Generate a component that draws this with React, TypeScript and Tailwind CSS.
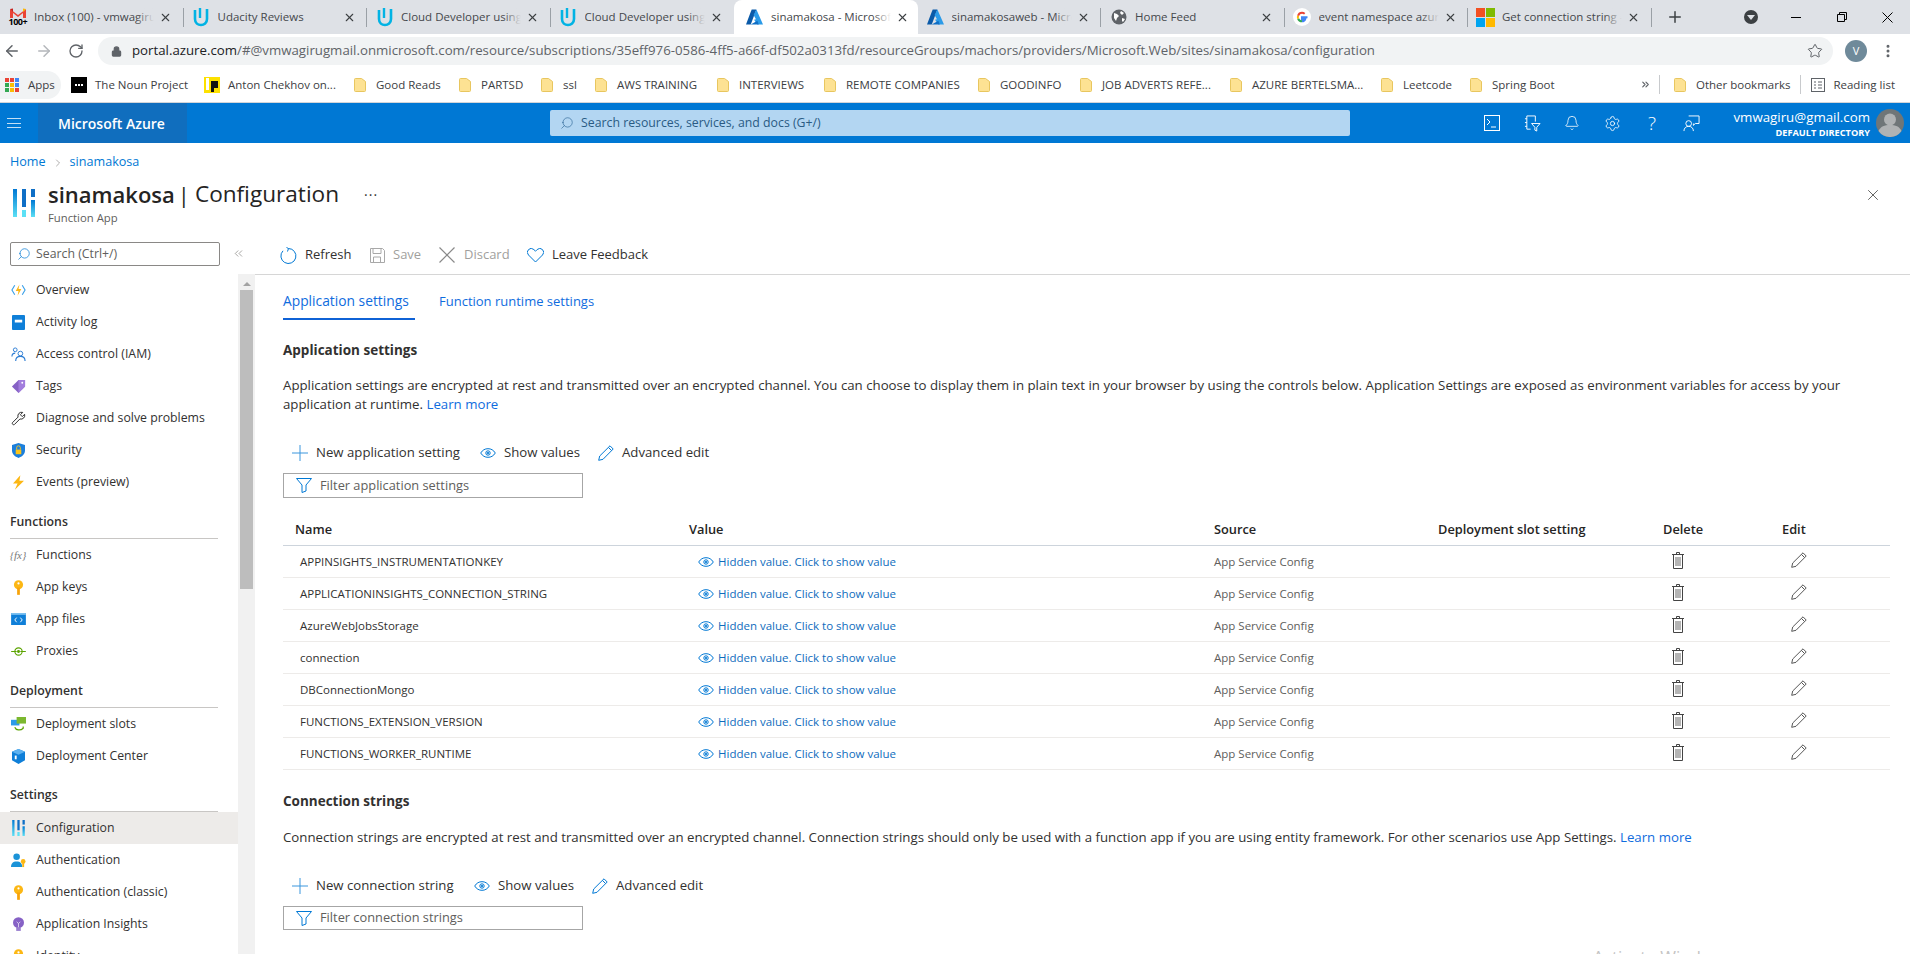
import React from 'react'
import {
  ArrowLeft,
  ArrowRight,
  Bell,
  ChevronRight,
  ChevronsLeft,
  ChevronsRight,
  Lock,
  MoreVertical,
  Plus,
  RotateCw,
  Search,
  Settings,
  Star,
  X,
} from 'lucide-react'

const Gmail = () => (
  <span className="relative block w-[18px] h-[20px]">
    <svg viewBox="0 0 18 12" className="w-[18px] h-[12px] block">
      <path d="M1 11V2l8 6 8-6v9h-3V6L9 10 4 6v5z" fill="#ea4335" />
      <path d="M1 2l3 3V1.5z" fill="#c5221f" />
      <path d="M14 1.5V5l3-3z" fill="#fbbc04" />
    </svg>
    <span className="absolute left-0 top-[10px] text-[9px] leading-[10px] font-bold text-black tracking-[-0.5px]">100+</span>
  </span>
)
const Udacity = () => (
  <svg viewBox="0 0 18 20" className="w-[18px] h-[20px]" fill="none" stroke="#02b3e4">
    <path d="M3 3v9c0 4 3 6 6 6s6-2 6-6V2" strokeWidth="2.6" />
    <path d="M8 1v10" strokeWidth="2.4" />
  </svg>
)
const AzureA = () => (
  <svg viewBox="0 0 18 18" className="w-[17px] h-[18px]">
    <path d="M6 1h5L5 17H0z" fill="#0a5aa8" />
    <path d="M11 1l7 16h-6L8.500 12l2-.5L8 7z" fill="#2b9be8" />
    <path d="M5 17l7-4 1.500 4z" fill="#0f6fc6" />
  </svg>
)
const Globe = () => (
  <svg viewBox="0 0 16 16" className="w-[16px] h-[16px]">
    <circle cx="8" cy="8" r="7.500" fill="#5f6368" />
    <path d="M3 4l3 1 2 2-2 2-1 3-2-3zM10 2l3 2-2 2-2-2zM11 9l3 1-2 3-1-1z" fill="#fff" />
  </svg>
)
const GoogleG = () => (
  <svg viewBox="0 0 18 18" className="w-[18px] h-[18px]">
    <circle cx="9" cy="9" r="9" fill="#fff" />
    <path d="M14.500 9.200H9v2h3.200c-.4 1.300-1.600 2.100-3.200 2.100" fill="none" stroke="#4285f4" strokeWidth="2" />
    <path d="M9 13.300c-1.800 0-3.300-1.100-3.900-2.700" fill="none" stroke="#34a853" strokeWidth="2" />
    <path d="M5.100 10.600a4.500 4.500 0 010-3" fill="none" stroke="#fbbc05" strokeWidth="2" />
    <path d="M5.100 7.600C5.700 6 7.200 4.800 9 4.800c1 0 1.900.4 2.700 1" fill="none" stroke="#ea4335" strokeWidth="2" />
  </svg>
)
const MsLogo = () => (
  <span className="grid grid-cols-[9px_9px] grid-rows-[9px_9px] gap-[1px]">
    <span className="bg-[#f25022]" />
    <span className="bg-[#7fba00]" />
    <span className="bg-[#00a4ef]" />
    <span className="bg-[#ffb900]" />
  </span>
)

const tabs = [
  { title: 'Inbox (100) - vmwagiru', icon: <Gmail />, sep: true, fade: true },
  { title: 'Udacity Reviews', icon: <Udacity />, sep: true, fade: false },
  { title: 'Cloud Developer using', icon: <Udacity />, sep: true, fade: true },
  { title: 'Cloud Developer using', icon: <Udacity />, sep: false, fade: true },
  { title: 'sinamakosa - Microsoft', icon: <AzureA />, sep: false, fade: true, active: true },
  { title: 'sinamakosaweb - Micro', icon: <AzureA />, sep: true, fade: true },
  { title: 'Home Feed', icon: <Globe />, sep: true, fade: false },
  { title: 'event namespace azure', icon: <GoogleG />, sep: true, fade: true },
  { title: 'Get connection string -', icon: <MsLogo />, sep: true, fade: true },
]

const TabStrip = () => (
  <div className="flex h-[34px] bg-[#dee1e6] items-end">
    {tabs.map((t, i) => (
      <div
        key={i}
        className={
          t.active
            ? 'relative flex items-center h-[34px] w-[183.500px] pl-[11px] bg-white rounded-t-[8px]'
            : 'relative flex items-center h-[34px] w-[183.500px] pl-[8px]'
        }
      >
        <span className="w-[19px] flex justify-center shrink-0">{t.icon}</span>
        <span className="relative ml-[7px] w-[120px] overflow-hidden whitespace-nowrap text-[11.500px] text-[#45484c]">
          {t.title}
          {t.fade && (
            <span
              className={
                t.active
                  ? 'absolute right-0 top-0 h-full w-[18px] bg-gradient-to-r from-transparent to-white'
                  : 'absolute right-0 top-0 h-full w-[18px] bg-gradient-to-r from-transparent to-[#dee1e6]'
              }
            />
          )}
        </span>
        <X size={13} strokeWidth={2} className="ml-[5px] text-[#3c4043] shrink-0" />
        {t.sep && <span className="absolute right-0 top-[8px] h-[19px] w-px bg-[#9aa0a6]" />}
      </div>
    ))}
    <div className="flex items-center h-[34px] flex-1 pl-[14px]">
      <Plus size={18} strokeWidth={2} className="text-[#3c4043]" />
      <span className="ml-[60px] w-[14px] h-[14px] rounded-full bg-[#3c4043] flex items-center justify-center">
        <span className="border-x-[4px] border-t-[5px] border-x-transparent border-t-[#dee1e6]" />
      </span>
      <span className="ml-[33px] w-[10px] h-px bg-black" />
      <svg viewBox="0 0 10 10" className="ml-[36px] w-[10px] h-[10px]" fill="none" stroke="#000">
        <path d="M.5 2.500h7v7h-7zM2.500 2.500v-2h7v7h-2" />
      </svg>
      <svg viewBox="0 0 11 11" className="ml-[35px] w-[11px] h-[11px]" fill="none" stroke="#000">
        <path d="M.5.5l10 10M10.500.5l-10 10" />
      </svg>
    </div>
  </div>
)

const Toolbar = () => (
  <div className="flex items-center h-[34px] bg-white">
    <ArrowLeft size={18} strokeWidth={2} className="ml-[3px] text-[#5f6368]" />
    <ArrowRight size={18} strokeWidth={2} className="ml-[14px] text-[#b4b7bb]" />
    <RotateCw size={16} strokeWidth={2} className="ml-[15px] text-[#5f6368]" />
    <div className="ml-[14px] flex items-center w-[1735px] h-[28px] rounded-full bg-[#f1f3f4] pl-[13px] pr-[10px]">
      <Lock size={11} strokeWidth={2.5} className="text-[#5f6368] fill-[#5f6368]" />
      <span className="ml-[10px] text-[13.250px] text-[#202124] whitespace-nowrap">
        portal.azure.com<span className="text-[#5f6368]">/#@vmwagirugmail.onmicrosoft.com/resource/subscriptions/35eff976-0586-4ff5-a66f-df502a0313fd/resourceGroups/machors/providers/Microsoft.Web/sites/sinamakosa/configuration</span>
      </span>
      <Star size={16} strokeWidth={1.5} className="ml-auto text-[#5f6368]" />
    </div>
    <span className="ml-[12px] w-[22px] h-[22px] rounded-full bg-[#6f8a9a] text-white text-[11px] flex items-center justify-center">V</span>
    <MoreVertical size={16} strokeWidth={2.5} className="ml-[13px] text-[#5f6368]" />
  </div>
)

const Folder = () => (
  <svg viewBox="0 0 12 16" className="w-[12px] h-[16px] shrink-0">
    <path d="M.5 2.500A1 1 0 011.500 1.500h6l4 3v9a1 1 0 01-1 1h-9a1 1 0 01-1-1z" fill="#fde293" stroke="#e8c65f" />
  </svg>
)

const bookmarks = [
  { label: 'Good Reads', cls: 'w-[105px]' },
  { label: 'PARTSD', cls: 'w-[82px]' },
  { label: 'ssl', cls: 'w-[54px]' },
  { label: 'AWS TRAINING', cls: 'w-[122px]' },
  { label: 'INTERVIEWS', cls: 'w-[107px]' },
  { label: 'REMOTE COMPANIES', cls: 'w-[154px]' },
  { label: 'GOODINFO', cls: 'w-[102px]' },
  { label: 'JOB ADVERTS REFE...', cls: 'w-[150px]' },
  { label: 'AZURE BERTELSMA...', cls: 'w-[151px]' },
  { label: 'Leetcode', cls: 'w-[89px]' },
  { label: 'Spring Boot', cls: 'w-[170px]' },
]

const Bookmarks = () => (
  <div className="flex items-center h-[35px] pb-px bg-white border-b border-[#d3d5d9] text-[11.500px] text-[#3c4043] whitespace-nowrap">
    <div className="flex items-center w-[61px] h-[28px] rounded-r-full bg-[#f1f3f4] pl-[5px]">
      <span className="grid grid-cols-3 gap-[1px] w-[14px]">
        {['#ea4335', '#ea4335', '#4285f4', '#34a853', '#fbbc04', '#4285f4', '#34a853', '#fbbc04', '#ea4335'].map((c, i) => (
          <svg key={i} viewBox="0 0 4 4" className="w-[4px] h-[4px]">
            <rect width="4" height="4" fill={c} />
          </svg>
        ))}
      </span>
      <span className="ml-[9px]">Apps</span>
    </div>
    <div className="ml-[10px] w-[133px] flex items-center">
      <span className="w-[16px] h-[16px] bg-black flex items-center justify-center gap-[1px]">
        <span className="w-[2px] h-[2px] bg-white" />
        <span className="w-[2px] h-[2px] bg-white" />
        <span className="w-[2px] h-[2px] bg-white" />
      </span>
      <span className="ml-[8px]">The Noun Project</span>
    </div>
    <div className="w-[150px] flex items-center">
      <svg viewBox="0 0 16 16" className="w-[16px] h-[16px]">
        <rect width="16" height="16" fill="#fde100" />
        <rect x="2" y="1" width="3" height="12" fill="#fff" />
        <path d="M7 4h7v7h-4v4H7z" fill="#111" />
      </svg>
      <span className="ml-[8px]">Anton Chekhov on...</span>
    </div>
    {bookmarks.map((b) => (
      <div key={b.label} className={b.cls + ' flex items-center'}>
        <Folder />
        <span className="ml-[10px]">{b.label}</span>
      </div>
    ))}
    <ChevronsRight size={11} strokeWidth={2.5} className="text-[#5f6368]" />
    <span className="ml-[8px] h-[19px] w-px bg-[#c8cacd]" />
    <span className="ml-[14px]"><Folder /></span>
    <span className="ml-[10px]">Other bookmarks</span>
    <span className="ml-[10px] h-[19px] w-px bg-[#c8cacd]" />
    <svg viewBox="0 0 14 14" className="ml-[10px] w-[14px] h-[14px]" fill="none" stroke="#5f6368">
      <rect x=".5" y=".5" width="13" height="13" />
      <path d="M3 4h2M7 4h4M3 7h2M7 7h4M3 10h2M7 10h4" />
    </svg>
    <span className="ml-[8px]">Reading list</span>
  </div>
)

const AzureBar = () => (
  <div className="flex items-center h-[40px] bg-[#0078d4] text-white">
    <div className="w-[38px] pl-[7px]">
      <div className="w-[14px] h-[10px] border-y border-[#c4e0f5] relative">
        <div className="absolute left-0 right-0 top-[3.500px] h-px bg-[#c4e0f5]" />
      </div>
    </div>
    <div className="w-[149px] h-[40px] bg-[#106ebe] flex items-center pl-[20px] text-[14px] font-semibold whitespace-nowrap">Microsoft Azure</div>
    <div className="ml-[363px] w-[800px] h-[26px] rounded-[2px] bg-[#b3d6f2] flex items-center pl-[10px] text-[#2a5b84] text-[12.300px]">
      <Search size={14} strokeWidth={1} className="-scale-x-100 text-[#1f5a8c]" />
      <span className="ml-[7px]">Search resources, services, and docs (G+/)</span>
    </div>
    <svg viewBox="0 0 16 16" className="ml-[134px] w-[16px] h-[16px]" fill="none" stroke="#fff">
      <rect x=".5" y=".5" width="15" height="15" />
      <path d="M3 4l3 3-3 3M7 12h5" />
    </svg>
    <svg viewBox="0 0 18 18" className="ml-[24px] w-[17px] h-[17px]" fill="none" stroke="#fff">
      <path d="M3 1h9v6M3 1v14h4M1 4h2M1 8h2M1 12h2M8 9h9l-3.500 4v4l-2-1v-3z" />
    </svg>
    <Bell size={16} strokeWidth={1.2} className="ml-[23px]" />
    <Settings size={17} strokeWidth={1.2} className="ml-[24px]" />
    <span className="ml-[27px] text-[19px] font-light leading-none">?</span>
    <svg viewBox="0 0 18 18" className="ml-[27px] w-[17px] h-[17px]" fill="none" stroke="#fff">
      <path d="M6 1h11v8h-4l-2 2V9" />
      <circle cx="6" cy="9" r="3" />
      <path d="M1 17c0-3 2-5 5-5s5 2 5 5" />
    </svg>
    <div className="ml-auto mr-[6px] mt-[2px] flex flex-col items-end">
      <span className="text-[13.300px] leading-[17px]">vmwagiru@gmail.com</span>
      <span className="text-[9.200px] leading-[13px] font-bold">DEFAULT DIRECTORY</span>
    </div>
    <svg viewBox="0 0 28 28" className="mr-[6px] w-[28px] h-[28px]">
      <circle cx="14" cy="14" r="14" fill="#6f7678" />
      <circle cx="14" cy="10.500" r="6" fill="#b0b3b4" />
      <path d="M2.500 22c2-4.500 6-6 11.500-6s9.500 1.500 11.500 6a14 14 0 01-23 0z" fill="#b0b3b4" />
    </svg>
  </div>
)

const ConfigBars = ({ small }: { small?: boolean }) => (
  <svg viewBox="0 0 22 28" className={small ? 'w-[13px] h-[16px]' : 'w-[22px] h-[28px]'}>
    <defs>
      <linearGradient id="cfg" x1="0" y1="0" x2="0" y2="1">
        <stop offset="0" stopColor="#0078d4" />
        <stop offset="1" stopColor="#5ce0f5" />
      </linearGradient>
    </defs>
    <rect x="0" width="4" height="28" fill="url(#cfg)" />
    <rect x="9" width="4" height="18" fill="#0f6fc6" />
    <rect x="9" y="21" width="4" height="7" fill="#5ce0f5" />
    <rect x="18" width="4" height="8" fill="#0f6fc6" />
    <rect x="18" y="11" width="4" height="17" fill="url(#cfg)" />
  </svg>
)
const Key = () => (
  <svg viewBox="0 0 12 16" className="w-[11px] h-[15px]">
    <circle cx="6" cy="5" r="5" fill="#fcb714" />
    <rect x="4.500" y="8" width="3" height="8" fill="#f7a30a" />
    <circle cx="6" cy="3.500" r="1.200" fill="#fff" />
  </svg>
)

const I: Record<string, React.ReactNode> = {
  overview: (
    <svg viewBox="0 0 16 12" className="w-[15px] h-[12px]" fill="none">
      <path d="M4 1L1 6l3 5M12 1l3 5-3 5" stroke="#3aa0e8" strokeWidth="1.200" />
      <path d="M9 0L5 7h3l-1 5 4-7H8z" fill="#fcb714" />
    </svg>
  ),
  log: (
    <svg viewBox="0 0 14 16" className="w-[13px] h-[15px]">
      <rect width="14" height="16" rx="1" fill="#0f7fd8" />
      <rect x="3" y="5" width="8" height="3" fill="#fff" />
    </svg>
  ),
  iam: (
    <svg viewBox="0 0 16 16" className="w-[15px] h-[15px]" fill="none" stroke="#2b7cd3">
      <circle cx="4.500" cy="3" r="2" />
      <circle cx="10" cy="7" r="2.500" />
      <path d="M1 10c0-2 1-3.500 3.500-3.500M5 15c0-3 2-5 5-5s5 2 5 5" strokeWidth="1.200" />
    </svg>
  ),
  tag: (
    <svg viewBox="0 0 16 16" className="w-[15px] h-[15px]">
      <path d="M8 1h7v7l-7 7-7-7z" fill="#8661c5" />
      <path d="M8 1h7v7L8 15z" fill="#a27ddd" />
      <circle cx="12" cy="4" r="1" fill="#fff" />
    </svg>
  ),
  wrench: (
    <svg viewBox="0 0 16 16" className="w-[15px] h-[15px]" fill="none" stroke="#222">
      <path d="M14.500 3.500L12 6 10 4l2.500-2.500a4 4 0 00-5 5l-6 6a1.500 1.500 0 002 2l6-6a4 4 0 005-5z" />
    </svg>
  ),
  shield: (
    <svg viewBox="0 0 14 16" className="w-[13px] h-[15px]">
      <path d="M7 0l7 2v6c0 4-3 6.500-7 8-4-1.500-7-4-7-8V2z" fill="#1b7fdc" />
      <rect x="4" y="7" width="6" height="5" fill="#fcc419" />
      <path d="M5 7V5a2 2 0 014 0v2" fill="none" stroke="#fcc419" />
    </svg>
  ),
  bolt: (
    <svg viewBox="0 0 12 16" className="w-[11px] h-[15px]">
      <path d="M8 0L0 9h5l-3 7 10-10H7z" fill="#fcb714" />
    </svg>
  ),
  fx: <span className="font-['Liberation_Serif',serif] italic text-[11px] leading-none text-[#7a7a7a]">{'{fx}'}</span>,
  key: <Key />,
  files: (
    <svg viewBox="0 0 16 13" className="w-[15px] h-[12px]">
      <rect width="16" height="13" fill="#0f7fd8" />
      <rect y="0" width="16" height="2" fill="#7cc0f0" />
      <path d="M6 5L4 7.500 6 10M10 5l2 2.500L10 10" fill="none" stroke="#fff" />
    </svg>
  ),
  proxy: (
    <svg viewBox="0 0 16 12" className="w-[15px] h-[11px]" fill="none" stroke="#5ba300" strokeWidth="1.200">
      <circle cx="8" cy="6" r="4" />
      <path d="M0 6h6M10 6h6" />
      <circle cx="8" cy="6" r="1" fill="#5ba300" />
    </svg>
  ),
  slots: (
    <svg viewBox="0 0 16 16" className="w-[15px] h-[15px]">
      <rect y="3" width="9" height="6" fill="#2b9be8" />
      <rect x="6" y="0" width="10" height="7" fill="#7cb82f" />
      <path d="M4 11c1 3 6 4 9 1V10" fill="none" stroke="#5ba300" strokeWidth="1.300" />
    </svg>
  ),
  center: (
    <svg viewBox="0 0 14 16" className="w-[13px] h-[15px]">
      <path d="M7 0l7 3v9l-7 4-7-4V3z" fill="#0f7fd8" />
      <path d="M7 0l7 3-7 3-7-3z" fill="#5db2f0" />
      <rect x="3" y="7" width="2" height="4" fill="#fff" />
    </svg>
  ),
  config: <ConfigBars small />,
  auth: (
    <svg viewBox="0 0 16 16" className="w-[15px] h-[15px]">
      <circle cx="6" cy="4" r="3.500" fill="#1b93d8" />
      <path d="M0 15c0-4 2-6 6-6s6 2 6 6z" fill="#1b93d8" />
      <circle cx="13" cy="9" r="2.500" fill="#fcb714" />
      <rect x="12" y="10" width="2" height="5" fill="#fcb714" />
    </svg>
  ),
  bulb: (
    <svg viewBox="0 0 12 16" className="w-[11px] h-[15px]">
      <circle cx="6" cy="6" r="6" fill="#8661c5" />
      <rect x="3.500" y="11" width="5" height="4" fill="#9a7fd0" />
      <path d="M4 5l2 2 2-2M6 7v4" fill="none" stroke="#fff" strokeWidth=".7" />
    </svg>
  ),
  identity: <Key />,
}

const NavRow = ({ icon, label, active }: { icon: string; label: string; active?: boolean }) => (
  <div className={active ? 'flex items-center h-[32px] bg-[#edebe9]' : 'flex items-center h-[32px]'}>
    <span className="w-[36px] pl-[10px] flex items-center">
      <span className="w-[16px] flex justify-center">{I[icon]}</span>
    </span>
    <span className="mt-[1px] text-[12.300px] text-[#323130] whitespace-nowrap">{label}</span>
  </div>
)

const NavHeading = ({ label, cls }: { label: string; cls: string }) => (
  <div className={cls + ' mx-[10px] w-[208px] flex items-end pb-[7px] border-b border-[#c8c6c4] text-[12.300px] font-semibold text-[#323130]'}>{label}</div>
)

const Sidebar = () => (
  <div className="flex flex-col w-[255px] shrink-0">
    <div className="flex items-start h-[40px] shrink-0 pt-[8px]">
      <div className="ml-[10px] w-[210px] h-[24px] border border-[#8a8886] rounded-[2px] flex items-center pl-[6px] text-[12.300px] text-[#605e5c]">
        <Search size={14} strokeWidth={1.2} className="-scale-x-100 text-[#0078d4]" />
        <span className="ml-[5px]">Search (Ctrl+/)</span>
      </div>
      <ChevronsLeft size={13} strokeWidth={1} className="ml-[12px] mt-[5px] text-[#605e5c]" />
    </div>
    <div className="flex flex-1 min-h-0">
      <div className="w-[238px] overflow-hidden">
        <NavRow icon="overview" label="Overview" />
        <NavRow icon="log" label="Activity log" />
        <NavRow icon="iam" label="Access control (IAM)" />
        <NavRow icon="tag" label="Tags" />
        <NavRow icon="wrench" label="Diagnose and solve problems" />
        <NavRow icon="shield" label="Security" />
        <NavRow icon="bolt" label="Events (preview)" />
        <NavHeading label="Functions" cls="h-[41px]" />
        <NavRow icon="fx" label="Functions" />
        <NavRow icon="key" label="App keys" />
        <NavRow icon="files" label="App files" />
        <NavRow icon="proxy" label="Proxies" />
        <NavHeading label="Deployment" cls="h-[41px]" />
        <NavRow icon="slots" label="Deployment slots" />
        <NavRow icon="center" label="Deployment Center" />
        <NavHeading label="Settings" cls="h-[40px]" />
        <NavRow icon="config" label="Configuration" active />
        <NavRow icon="auth" label="Authentication" />
        <NavRow icon="key" label="Authentication (classic)" />
        <NavRow icon="bulb" label="Application Insights" />
        <NavRow icon="identity" label="Identity" />
      </div>
      <div className="w-[17px] bg-[#f1f1f1] flex flex-col items-center pt-[8px]">
        <span className="border-x-[4px] border-b-[4px] border-x-transparent border-b-[#a3a3a3]" />
        <div className="mt-[4px] w-[13px] h-[299px] bg-[#bdbdbd]" />
      </div>
    </div>
  </div>
)

const Refresh = () => (
  <svg viewBox="0 0 17 17" className="w-[17px] h-[17px]" fill="none" stroke="#0078d4">
    <path d="M3 3.800a7.500 7.500 0 105.500-2.300" />
    <path d="M6.500 0.500l2 1-1 3" />
  </svg>
)

const SaveIcon = () => (
  <svg viewBox="0 0 15 15" className="w-[15px] h-[15px]" fill="none" stroke="#a8a8a8">
    <path d="M.5.5h12l2 2v12H.5z" />
    <path d="M3 .5v5h8v-5M3.500 14.500V9h7v5.500" />
  </svg>
)

const BigX = () => (
  <svg viewBox="0 0 16 16" className="w-[16px] h-[16px]" fill="none" stroke="#8a8a8a" strokeWidth="1.200">
    <path d="M.5.5l15 15M15.500.5l-15 15" />
  </svg>
)

const HeartIcon = () => (
  <svg viewBox="0 0 17 15" className="w-[17px] h-[15px]" fill="none" stroke="#0078d4">
    <path d="M8.500 14L1.500 7a3.800 3.800 0 015.400-5.400l1.600 1.600 1.600-1.600A3.800 3.800 0 0115.500 7z" />
  </svg>
)

const CommandBar = () => (
  <div className="flex items-center h-[41px] pt-[2px] border-b border-[#d6d6d6] text-[13px] whitespace-nowrap">
    <span className="ml-[25px] flex"><Refresh /></span>
    <span className="ml-[8px] w-[45px] text-[#323130]">Refresh</span>
    <span className="ml-[20px] flex"><SaveIcon /></span>
    <span className="ml-[8px] w-[28px] text-[#a19f9d]">Save</span>
    <span className="ml-[18px] flex"><BigX /></span>
    <span className="ml-[9px] w-[45px] text-[#a19f9d]">Discard</span>
    <span className="ml-[18px] flex"><HeartIcon /></span>
    <span className="ml-[8px] text-[#323130]">Leave Feedback</span>
  </div>
)

const Funnel = () => (
  <svg viewBox="0 0 16 15" className="w-[16px] h-[15px]" fill="none" stroke="#0078d4">
    <path d="M.5.5h15L10 7v6l-4 1.500V7z" />
  </svg>
)

const ThinPencil = ({ color }: { color: string }) => (
  <svg viewBox="0 0 16 16" className="w-[16px] h-[16px]" fill="none" stroke={color}>
    <path d="M12 .8l3.200 3.200L5 14.300l-4.300 1 1-4.300zM10.500 2.500l3 3" />
  </svg>
)

const EyeIcon = () => (
  <svg viewBox="0 0 16 10" className="w-[16px] h-[10px]" fill="none" stroke="#0078d4">
    <path d="M.7 5C2.500 2 5 .7 8 .7S13.500 2 15.300 5C13.500 8 11 9.300 8 9.300S2.500 8 .7 5z" />
    <circle cx="8" cy="5" r="2.200" />
    <circle cx="8" cy="5" r=".7" fill="#0078d4" />
  </svg>
)

const ThinPlus = () => (
  <svg viewBox="0 0 16 16" className="w-[16px] h-[16px]" fill="none" stroke="#3a96dd">
    <path d="M8 0v16M0 8h16" />
  </svg>
)

const TrashIcon = () => (
  <svg viewBox="0 0 12 17" className="w-[12px] h-[17px]" fill="none" stroke="#444">
    <path d="M0 2.500h12M4.500 2.500V.5h3v2M1.500 2.500v14h9v-14" />
    <path d="M4 5v9M6 5v9M8 5v9" strokeWidth=".8" />
  </svg>
)

const Actions = ({ label, w1, w2 }: { label: string; w1: string; w2: string }) => (
  <div className="flex items-center text-[13.200px] text-[#323130] whitespace-nowrap">
    <span className="ml-[9px] flex"><ThinPlus /></span>
    <span className={w1 + ' ml-[8px]'}>{label}</span>
    <EyeIcon />
    <span className={w2 + ' ml-[8px]'}>Show values</span>
    <ThinPencil color="#0078d4" />
    <span className="ml-[8px]">Advanced edit</span>
  </div>
)

const FilterBox = ({ text }: { text: string }) => (
  <div className="flex items-center w-[300px] border border-[#a6a6a6] pl-[12px] text-[12.800px] text-[#605e5c]">
    <Funnel />
    <span className="ml-[8px]">{text}</span>
  </div>
)

const settings = [
  'APPINSIGHTS_INSTRUMENTATIONKEY',
  'APPLICATIONINSIGHTS_CONNECTION_STRING',
  'AzureWebJobsStorage',
  'connection',
  'DBConnectionMongo',
  'FUNCTIONS_EXTENSION_VERSION',
  'FUNCTIONS_WORKER_RUNTIME',
]

const SettingsTable = () => (
  <div className="mt-[16px]">
    <div className="grid grid-cols-[406px_525px_224px_225px_119px_1fr] items-center h-[32px] pt-[1px] border-b border-[#cdd4dc] text-[12.800px] font-semibold text-[#252423]">
      <span className="pl-[12px]">Name</span>
      <span>Value</span>
      <span>Source</span>
      <span>Deployment slot setting</span>
      <span>Delete</span>
      <span>Edit</span>
    </div>
    {settings.map((name) => (
      <div key={name} className="grid grid-cols-[406px_525px_224px_225px_119px_1fr] items-center h-[32px] border-b border-[#edebe9] text-[11.500px]">
        <span className="pl-[17px] text-[#323130]">{name}</span>
        <span className="pl-[9px] flex items-center text-[#0f6cbd]">
          <EyeIcon />
          <span className="ml-[4px]">Hidden value. Click to show value</span>
        </span>
        <span className="text-[#605e5c]">App Service Config</span>
        <span />
        <span className="pl-[9px] pb-[3px] flex">
          <TrashIcon />
        </span>
        <span className="pl-[9px] pb-[3px] flex">
          <ThinPencil color="#555" />
        </span>
      </div>
    ))}
  </div>
)

const Main = () => (
  <div className="flex-1 min-w-0">
    <CommandBar />
    <div className="pl-[28px] pr-[20px]">
      <div className="flex h-[45px] text-[13px] text-[#0f6cde]">
        <div className="flex items-start pt-[16px] w-[132px] border-b-2 border-[#0f62d6] text-[13.800px] font-medium whitespace-nowrap">Application settings</div>
        <div className="ml-[24px] pt-[17px]">Function runtime settings</div>
      </div>
      <h2 className="mt-[20px] text-[13.500px] leading-[20px] font-bold text-[#323130]">Application settings</h2>
      <p className="mt-[16px] text-[13.260px] leading-[19px] text-[#323130]">
        Application settings are encrypted at rest and transmitted over an encrypted channel. You can choose to display them in plain text in your browser by using the controls below. Application Settings are exposed as environment variables for access by your application at runtime. <span className="text-[#0f6cde]">Learn more</span>
      </p>
      <div className="mt-[29px] h-[20px] flex items-center">
        <Actions label="New application setting" w1="w-[164px]" w2="w-[94px]" />
      </div>
      <div className="mt-[10px] h-[25px] flex">
        <FilterBox text="Filter application settings" />
      </div>
      <SettingsTable />
      <h2 className="mt-[21px] text-[13.500px] leading-[20px] font-bold text-[#323130]">Connection strings</h2>
      <p className="mt-[17px] text-[13.260px] leading-[19px] text-[#323130]">
        Connection strings are encrypted at rest and transmitted over an encrypted channel. Connection strings should only be used with a function app if you are using entity framework. For other scenarios use App Settings. <span className="text-[#0f6cde]">Learn more</span>
      </p>
      <div className="mt-[29px] h-[20px] flex items-center">
        <Actions label="New connection string" w1="w-[158px]" w2="w-[94px]" />
      </div>
      <div className="mt-[10px] h-[24px] flex">
        <FilterBox text="Filter connection strings" />
      </div>
    </div>
  </div>
)

const App = () => {
  return (
    <div className="relative w-[1910px] h-[954px] overflow-hidden bg-white font-['Open_Sans',sans-serif]">
      <TabStrip />
      <Toolbar />
      <Bookmarks />
      <AzureBar />
      <div className="h-[91px] relative">
        <div className="pl-[10px] pt-[11px] flex items-center h-[28px] text-[12.600px] text-[#0078d4]">
          Home
          <ChevronRight size={12} strokeWidth={1} className="mx-[6px] text-[#605e5c]" />
          sinamakosa
        </div>
        <div className="flex items-start pl-[13px] pt-[18px]">
          <ConfigBars />
          <div className="ml-[13px] -mt-[9px]">
            <div className="flex items-center">
              <span className="flex text-[22px] leading-[28px] text-[#252423] whitespace-nowrap">
                <span className="font-semibold">sinamakosa</span>
                <span className="ml-[3px] mr-[5px]">|</span>
                <span className="text-[22.600px]">Configuration</span>
              </span>
              <span className="ml-[25px] text-[14px] text-[#323130] tracking-[1px]">···</span>
            </div>
            <div className="mt-[2px] text-[11.300px] leading-[16px] text-[#605e5c]">Function App</div>
          </div>
          <X size={18} strokeWidth={1} className="ml-auto mr-[28px] -mt-[3px] text-[#323130]" />
        </div>
      </div>
      <div className="flex h-[720px]">
        <Sidebar />
        <Main />
      </div>
      <span className="absolute left-[1593px] top-[947px] text-[17px] leading-[20px] text-[#c4c4c4] whitespace-nowrap">Activate Windows</span>
    </div>
  )
}

export default App
